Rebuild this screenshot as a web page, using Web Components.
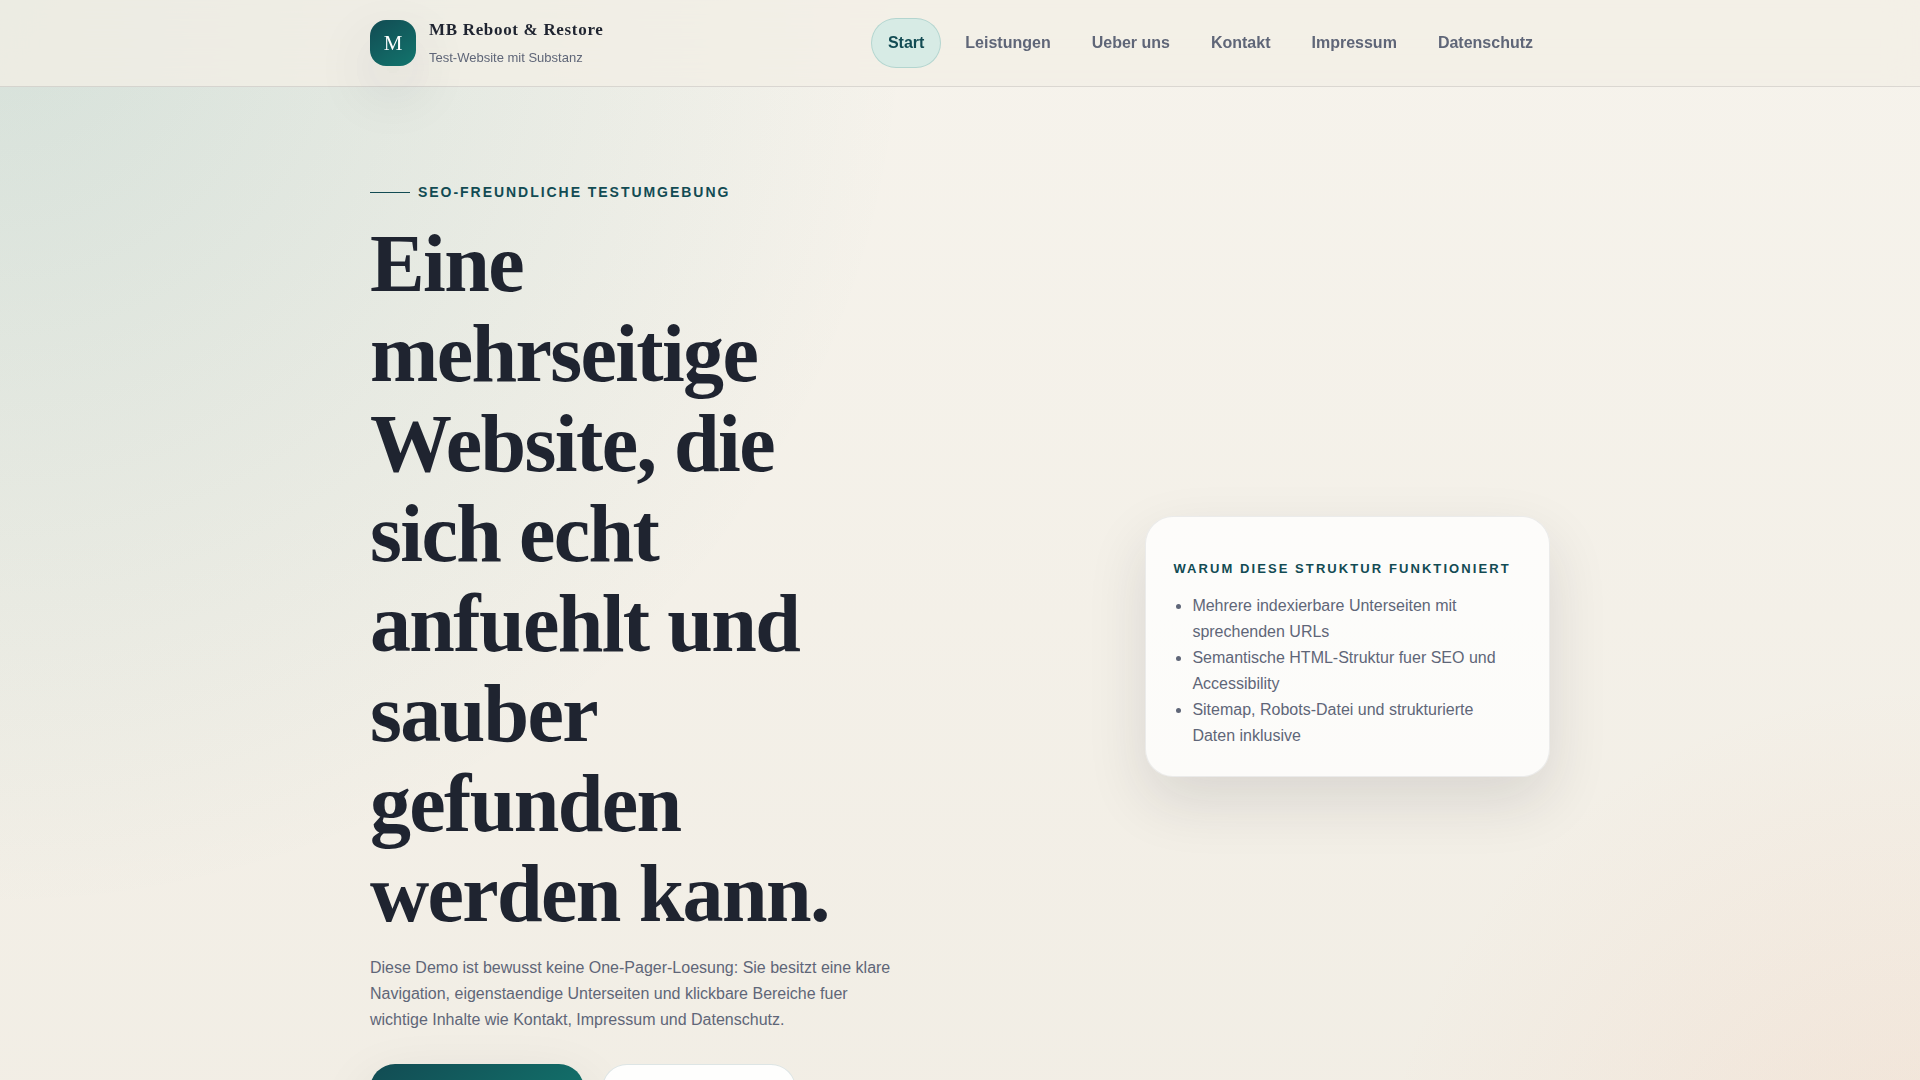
<!DOCTYPE html>
<html lang="de">
<head>
<meta charset="utf-8">
<meta name="viewport" content="width=device-width, initial-scale=1">
<title>MB Reboot &amp; Restore</title>
<style>
:root{
  --ink:#1f2430; --muted:#5f6678; --teal:#124b53; --teal-2:#12756d;
  --line:rgba(31,36,48,.12); --shadow:0 24px 60px rgba(31,36,48,.12);
  --serif:"Liberation Serif",serif; --wrap:1180px;
}
html{min-height:100%}
body{
  margin:0; min-height:100vh; color:var(--ink);
  font:16px/26px "Liberation Sans",sans-serif;
  background:
    radial-gradient(circle at top left, rgba(18,117,109,.14), transparent 40%),
    radial-gradient(circle at bottom right, rgba(244,162,125,.14), transparent 24%),
    linear-gradient(180deg,#f6f3ec 0%,#f1ede4 100%);
}
</style>
</head>
<body>
<site-header>
  <site-brand slot="brand" href="#start" mark="M">MB Reboot &amp; Restore<span slot="tagline">Test-Website mit Substanz</span></site-brand>
  <nav-link href="#start" current>Start</nav-link>
  <nav-link href="#leistungen">Leistungen</nav-link>
  <nav-link href="#ueber-uns">Ueber uns</nav-link>
  <nav-link href="#kontakt">Kontakt</nav-link>
  <nav-link href="#impressum">Impressum</nav-link>
  <nav-link href="#datenschutz">Datenschutz</nav-link>
</site-header>
<main>
  <hero-section>
    <span slot="eyebrow">SEO-FREUNDLICHE TESTUMGEBUNG</span>
    <span slot="title">Eine mehrseitige Website, die sich echt anfuehlt und sauber gefunden werden kann.</span>
    <span slot="lead">Diese Demo ist bewusst keine One-Pager-Loesung: Sie besitzt eine klare Navigation, eigenstaendige Unterseiten und klickbare Bereiche fuer wichtige Inhalte wie Kontakt, Impressum und Datenschutz.</span>
    <action-link slot="actions" href="#leistungen" label="Zu den Leistungen" primary></action-link>
    <action-link slot="actions" href="#kontakt" label="Kontakt"></action-link>
    <info-card slot="aside" heading="WARUM DIESE STRUKTUR FUNKTIONIERT" items="Mehrere indexierbare Unterseiten mit sprechenden URLs|Semantische HTML-Struktur fuer SEO und Accessibility|Sitemap, Robots-Datei und strukturierte Daten inklusive"></info-card>
  </hero-section>
</main>
<script>
const define = (name, render) => customElements.define(name, class extends HTMLElement {
  connectedCallback() {
    if (!this.shadowRoot) this.attachShadow({ mode: "open" }).innerHTML = render(this);
  }
});

define("site-header", () => `
<style>
:host{display:block;position:sticky;top:0;z-index:2;border-bottom:1px solid var(--line);
  background:rgba(242,238,230,.78);backdrop-filter:blur(16px)}
.bar{display:flex;align-items:center;justify-content:space-between;gap:24px;flex-wrap:wrap;
  width:min(var(--wrap),calc(100% - 32px));margin:0 auto;padding:15px 0}
nav{display:flex;flex-wrap:wrap;gap:7px}
</style>
<header class="bar"><slot name="brand"></slot><nav aria-label="Hauptnavigation"><slot></slot></nav></header>`);

define("site-brand", el => `
<style>
:host{display:block}
a{display:flex;align-items:center;gap:13px;color:inherit;text-decoration:none}
.mark{display:grid;place-items:center;width:46px;height:46px;border-radius:16px;color:#fff;
  font:21px/24px var(--serif);background:linear-gradient(145deg,var(--teal),var(--teal-2));box-shadow:var(--shadow)}
.text{display:flex;flex-direction:column}
.name{font:bold 17px/30px var(--serif);letter-spacing:.04em}
.tag{font-size:13px;color:var(--muted)}
</style>
<a href="${el.getAttribute("href")}"><span class="mark" aria-hidden="true">${el.getAttribute("mark")}</span>
<span class="text"><span class="name"><slot></slot></span><span class="tag"><slot name="tagline"></slot></span></span></a>`);

define("nav-link", el => `
<style>
:host{display:block}
a{display:block;padding:11px 16px;border:1px solid transparent;border-radius:999px;
  font-weight:bold;color:var(--muted);text-decoration:none}
:host([current]) a{color:var(--teal);background:#d7ebe5;border-color:rgba(18,117,109,.18)}
</style>
<a href="${el.getAttribute("href")}"${el.hasAttribute("current") ? ' aria-current="page"' : ""}><slot></slot></a>`);

define("action-link", el => `
<style>
:host{display:block}
a{display:block;box-sizing:border-box;width:194px;height:50px;border:1px solid rgba(18,75,83,.14);
  border-radius:999px;background:rgba(255,255,255,.9)}
:host([primary]) a{width:214px;border-color:transparent;
  background:linear-gradient(145deg,var(--teal),var(--teal-2)) border-box;box-shadow:var(--shadow)}
</style>
<a href="${el.getAttribute("href")}" aria-label="${el.getAttribute("label")}"></a>`);

define("hero-section", () => `
<style>
:host{display:block}
section{display:grid;grid-template-columns:minmax(0,145fr) minmax(0,80fr);gap:42px;align-items:center;
  width:min(var(--wrap),calc(100% - 32px));margin:0 auto;padding:92px 0 120px}
.eyebrow{display:flex;align-items:center;gap:8px;margin:0;font-size:14px;font-weight:bold;
  letter-spacing:.14em;color:var(--teal)}
.eyebrow::before{content:"";width:40px;height:1px;background:currentColor}
h1{margin:14px 0 16px;max-width:500px;font:bold 82px/90px var(--serif);letter-spacing:-.02em}
.lead{margin:0;max-width:530px;color:var(--muted)}
.actions{display:flex;flex-wrap:wrap;gap:18px;margin-top:31px}
@media (max-width:900px){section{grid-template-columns:1fr}h1{font-size:48px;line-height:54px}}
</style>
<section>
  <div>
    <p class="eyebrow"><slot name="eyebrow"></slot></p>
    <h1><slot name="title"></slot></h1>
    <p class="lead"><slot name="lead"></slot></p>
    <div class="actions"><slot name="actions"></slot></div>
  </div>
  <slot name="aside"></slot>
</section>`);

define("info-card", el => `
<style>
:host{display:block}
aside{padding:27px;border:1px solid rgba(31,36,48,.08);border-radius:28px;background:rgba(255,255,255,.76);box-shadow:var(--shadow)}
h2{margin:14px 0 13px;font-size:13px;line-height:22px;letter-spacing:.16em;color:var(--teal);white-space:nowrap}
ul{margin:0;padding:0 10px 0 19px;color:var(--muted)}
</style>
<aside><h2>${el.getAttribute("heading")}</h2>
<ul>${el.getAttribute("items").split("|").map(t => `<li>${t}</li>`).join("")}</ul></aside>`);
</script>
</body>
</html>
